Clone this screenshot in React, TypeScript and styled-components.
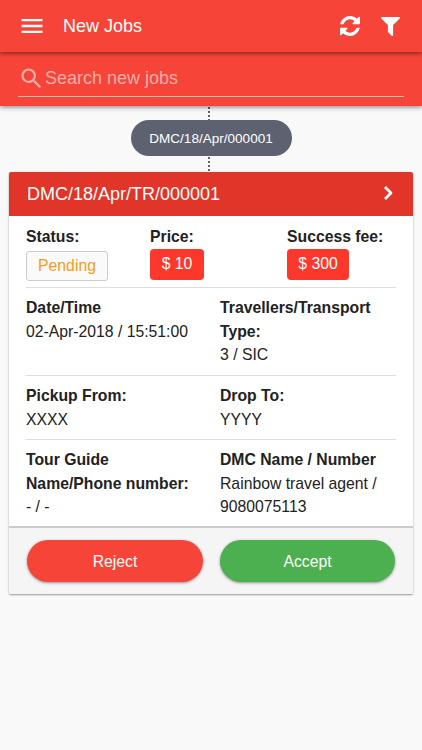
import React from "react";
import styled, { createGlobalStyle } from "styled-components";
import { MdMenu, MdSearch } from "react-icons/md";

const GlobalStyle = createGlobalStyle`
  * { box-sizing: border-box; }
  body { margin: 0; background: #f9f9f9; font-family: "Liberation Sans", Arial, sans-serif; }
`;

const Screen = styled.div`
  width: 422px;
  height: 750px;
  overflow: hidden;
  background: #f9f9f9;
  color: #222;
`;

const AppBar = styled.header`
  position: relative;
  z-index: 2;
  height: 52px;
  display: flex;
  align-items: center;
  padding: 0 22px 0 17.5px;
  background: #f64438;
  color: #fff;
  box-shadow: 0 1px 5px rgba(0, 0, 0, 0.55);
`;

const Title = styled.h1`
  flex: 1;
  margin: 0 0 0 17.5px;
  font-size: 18px;
  line-height: 24px;
  font-weight: 400;
`;

const BarActions = styled.div`
  display: flex;
  align-items: center;
  gap: 21px;
`;

const SearchBar = styled.div`
  position: relative;
  z-index: 1;
  height: 54px;
  padding: 9px 18px 0;
  background: #f64438;
  box-shadow: 0 1px 5px rgba(0, 0, 0, 0.5);
`;

const SearchField = styled.label`
  display: flex;
  align-items: center;
  height: 36px;
  border-bottom: 1px solid #fcb9b4;
  color: #fcaea8;
`;

const SearchInput = styled.input`
  flex: 1;
  min-width: 0;
  padding: 0 0 2px;
  border: 0;
  outline: 0;
  background: transparent;
  color: #fff;
  font: 400 18px/24px "Liberation Sans", Arial, sans-serif;
  &::placeholder { color: #fcaea8; opacity: 1; }
`;

const Timeline = styled.div`
  height: 66px;
  display: flex;
  flex-direction: column;
  align-items: center;
`;

const Dots = styled.div<{ $height: number }>`
  height: ${(p) => p.$height}px;
  width: 2px;
  margin-right: 4px;
  background: repeating-linear-gradient(to bottom, transparent 0 1px, #5e6170 1px 3px, transparent 3px 4px);
`;

const GroupPill = styled.div`
  width: 161px;
  height: 36px;
  border-radius: 18px;
  background: #5e6170;
  color: #fff;
  font-size: 13.55px;
  line-height: 37px;
  text-align: center;
`;

const Card = styled.article`
  margin: 0 9px;
  border-radius: 2px;
  background: #fff;
  box-shadow: 0 1px 2px rgba(0, 0, 0, 0.4);
  overflow: hidden;
`;

const CardHeader = styled.div`
  height: 44px;
  display: flex;
  align-items: center;
  justify-content: space-between;
  padding: 0 20px 0 18px;
  background: #e13529;
  color: #fff;
  font-size: 18px;
`;

const Chevron = styled.svg`
  margin-bottom: 3px;
`;

const CardBody = styled.div`
  height: 310px;
  padding: 1px 17px 0;
  font-size: 15.75px;
  line-height: 23.6px;
`;

const Section = styled.section<{ $columns: string; $height: number; $last?: boolean }>`
  display: grid;
  grid-template-columns: ${(p) => p.$columns};
  align-items: start;
  height: ${(p) => p.$height}px;
  padding-top: 8px;
  border-bottom: ${(p) => (p.$last ? "0" : "1px solid #dedede")};
`;

const Label = styled.div`
  font-weight: 700;
`;

const Value = styled.div`
  white-space: nowrap;
`;

const Status = styled.span`
  display: block;
  width: 82px;
  height: 30px;
  margin-top: 2px;
  border: 1px solid #ccc;
  border-radius: 3px;
  background: #fafafa;
  color: #f99b16;
  line-height: 28px;
  text-align: center;
`;

const Amount = styled.span<{ $width: number }>`
  display: block;
  width: ${(p) => p.$width}px;
  height: 31px;
  border-radius: 4px;
  background: #fc382d;
  color: #fff;
  line-height: 30px;
  text-align: center;
`;

const CardFooter = styled.footer`
  height: 68px;
  display: grid;
  grid-template-columns: 176px 175px;
  gap: 17px;
  padding: 12px 18px 0;
  border-top: 2px solid #ccc;
  background: #f5f5f5;
`;

const ActionButton = styled.button<{ $color: string }>`
  height: 42px;
  padding: 2px 0 0;
  border: 0;
  border-radius: 21px;
  background: ${(p) => p.$color};
  color: #fff;
  font: 400 15.75px "Liberation Sans", Arial, sans-serif;
  box-shadow: 0 1px 3px rgba(0, 0, 0, 0.4);
`;

const halves = "194px 1fr";

const RefreshIcon = () => (
  <svg width="20" height="20" viewBox="0 128 1536 1536" fill="currentColor">
    <path d="M1511 1056q0 5-1 7-64 268-268 434.5t-478 166.5q-146 0-282.5-55t-243.5-157l-129 129q-19 19-45 19t-45-19-19-45v-448q0-26 19-45t45-19h448q26 0 45 19t19 45-19 45l-137 137q71 66 161 102t187 36q134 0 250-65t186-179q11-17 53-117 8-23 30-23h192q13 0 22.5 9.5t9.5 22.5zm25-800v448q0 26-19 45t-45 19h-448q-26 0-45-19t-19-45 19-45l138-138q-148-137-349-137-134 0-250 65t-186 179q-11 17-53 117-8 23-30 23h-199q-13 0-22.5-9.5t-9.5-22.5v-7q65-268 270-434.5t480-166.5q146 0 284 55.5t245 156.5l130-129q19-19 45-19t45 19 19 45z" />
  </svg>
);

const FilterIcon = () => (
  <svg width="19" height="19" viewBox="0 0 1408 1408" fill="currentColor">
    <path d="M1403 39q17 41-14 70l-493 493v742q0 42-39 59-13 5-25 5-27 0-45-19l-256-256q-19-19-19-45v-486l-493-493q-31-29-14-70 17-39 59-39h1280q42 0 59 39z" />
  </svg>
);

export default function App() {
  return (
    <Screen>
      <GlobalStyle />
      <AppBar>
        <MdMenu size={28} />
        <Title>New Jobs</Title>
        <BarActions>
          <RefreshIcon />
          <FilterIcon />
        </BarActions>
      </AppBar>
      <SearchBar>
        <SearchField>
          <MdSearch size={27} />
          <SearchInput placeholder="Search new jobs" />
        </SearchField>
      </SearchBar>
      <Timeline>
        <Dots $height={14} />
        <GroupPill>DMC/18/Apr/000001</GroupPill>
        <Dots $height={16} />
      </Timeline>
      <Card>
        <CardHeader>
          <span>DMC/18/Apr/TR/000001</span>
          <Chevron width="10" height="16" viewBox="0 0 10 16" fill="none" stroke="#fff" strokeWidth="2.8" strokeLinejoin="round">
            <path d="M2 2l6 6-6 6" />
          </Chevron>
        </CardHeader>
        <CardBody>
          <Section $columns="124px 137px 1fr" $height={71}>
            <div><Label>Status:</Label><Status>Pending</Status></div>
            <div><Label>Price:</Label><Amount $width={54}>$ 10</Amount></div>
            <div><Label>Success fee:</Label><Amount $width={62}>$ 300</Amount></div>
          </Section>
          <Section $columns={halves} $height={88}>
            <div><Label>Date/Time</Label><Value>02-Apr-2018 / 15:51:00</Value></div>
            <div><Label>Travellers/Transport<br />Type:</Label><Value>3 / SIC</Value></div>
          </Section>
          <Section $columns={halves} $height={64}>
            <div><Label>Pickup From:</Label><Value>XXXX</Value></div>
            <div><Label>Drop To:</Label><Value>YYYY</Value></div>
          </Section>
          <Section $columns={halves} $height={86} $last>
            <div><Label>Tour Guide<br />Name/Phone number:</Label><Value>- / -</Value></div>
            <div><Label>DMC Name / Number</Label><Value>Rainbow travel agent /<br />9080075113</Value></div>
          </Section>
        </CardBody>
        <CardFooter>
          <ActionButton $color="#f64438">Reject</ActionButton>
          <ActionButton $color="#4caf50">Accept</ActionButton>
        </CardFooter>
      </Card>
    </Screen>
  );
}
